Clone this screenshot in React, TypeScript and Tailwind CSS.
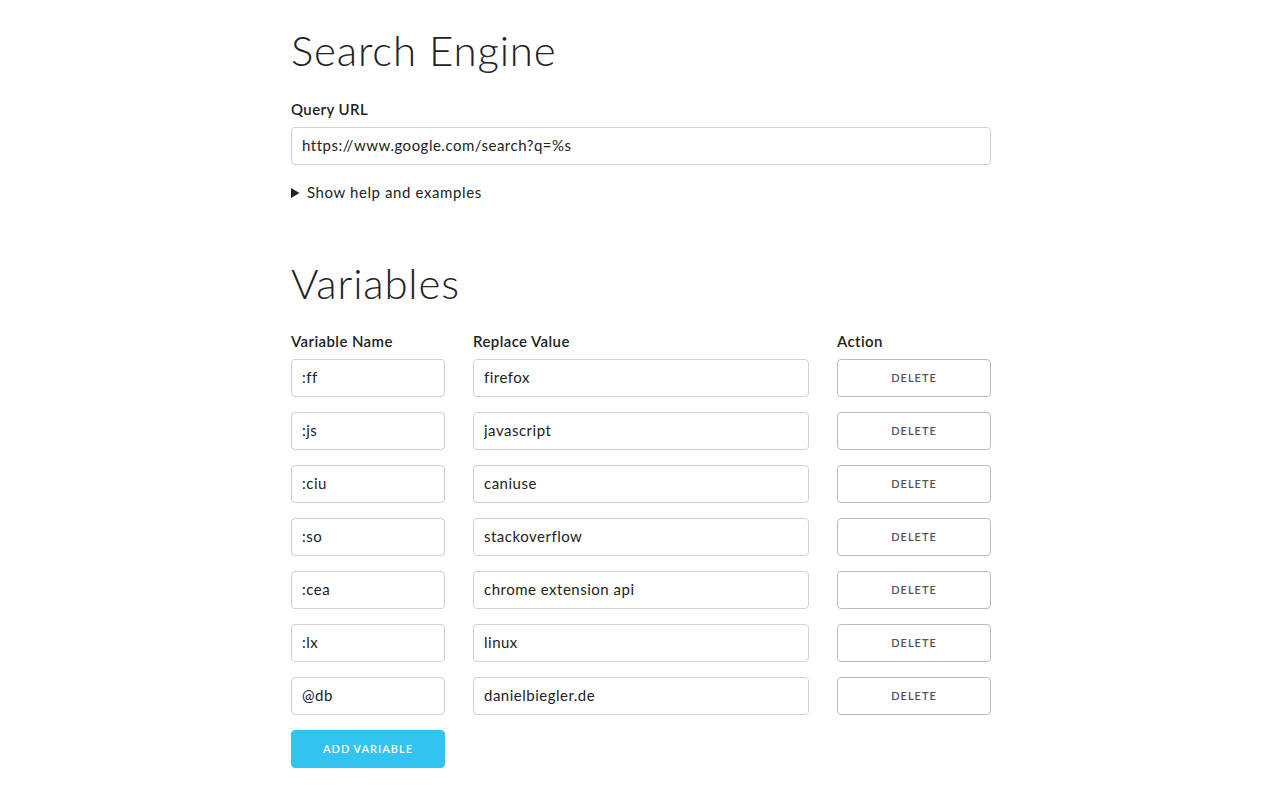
import { useState } from 'react'

type Variable = {
  name: string
  value: string
}

const initialVariables: Variable[] = [
  { name: ':ff', value: 'firefox' },
  { name: ':js', value: 'javascript' },
  { name: ':ciu', value: 'caniuse' },
  { name: ':so', value: 'stackoverflow' },
  { name: ':cea', value: 'chrome extension api' },
  { name: ':lx', value: 'linux' },
  { name: '@db', value: 'danielbiegler.de' },
]

const inputClass =
  'h-[38px] w-full rounded-[4px] border border-[#d1d1d1] bg-white px-[10px] pt-[5px] pb-[7px] text-[15px] tracking-[0.5px] text-[#222] outline-none focus:border-[#33c3f0]'

const labelClass = 'mb-[7px] block font-semibold leading-[22px] tracking-[0.4px]'

export default function App() {
  const [queryUrl, setQueryUrl] = useState('https://www.google.com/search?q=%s')
  const [variables, setVariables] = useState<Variable[]>(initialVariables)

  const updateVariable = (index: number, field: keyof Variable, text: string) => {
    setVariables(variables.map((v, i) => (i === index ? { ...v, [field]: text } : v)))
  }

  return (
    <div className="min-h-screen bg-white pl-[2px] font-['Lato','Noto_Sans',sans-serif] text-[15px] leading-[1.6] text-[#222]">
      <div className="mx-auto w-[700px] pt-[24px]">
        <h2 className="mb-[21px] text-[42px] leading-[1.25] font-light tracking-[0.8px]">Search Engine</h2>

        <label className={labelClass}>Query URL</label>
        <input
          className={inputClass + ' mb-[15px]'}
          value={queryUrl}
          onChange={(e) => setQueryUrl(e.target.value)}
        />

        <details className="mb-[53px]">
          <summary className="cursor-pointer tracking-[0.6px]">Show help and examples</summary>
          <p className="mt-2 text-[#555]">
            Use %s in the query URL where your search terms should go.
          </p>
        </details>

        <h2 className="mb-[21px] text-[42px] leading-[1.25] font-light tracking-[0.8px]">Variables</h2>

        <div className="flex gap-[28px]">
          <label className={labelClass + ' w-[154px]'}>Variable Name</label>
          <label className={labelClass + ' w-[336px]'}>Replace Value</label>
          <label className={labelClass + ' w-[154px]'}>Action</label>
        </div>

        {variables.map((v, i) => (
          <div key={i} className="mb-[15px] flex gap-[28px]">
            <div className="w-[154px]">
              <input
                className={inputClass}
                value={v.name}
                onChange={(e) => updateVariable(i, 'name', e.target.value)}
              />
            </div>
            <div className="w-[336px]">
              <input
                className={inputClass}
                value={v.value}
                onChange={(e) => updateVariable(i, 'value', e.target.value)}
              />
            </div>
            <div className="w-[154px]">
              <button
                className="h-[38px] w-full rounded-[4px] border border-[#bbb] bg-transparent text-[11px] font-semibold tracking-[1px] text-[#555] uppercase hover:border-[#888] hover:text-[#333]"
                onClick={() => setVariables(variables.filter((_, j) => j !== i))}
              >
                Delete
              </button>
            </div>
          </div>
        ))}

        <button
          className="h-[38px] w-[154px] rounded-[4px] border border-[#33c3f0] bg-[#33c3f0] text-[11px] font-semibold tracking-[1px] text-white uppercase hover:bg-[#1eaedb]"
          onClick={() => setVariables([...variables, { name: '', value: '' }])}
        >
          Add Variable
        </button>
      </div>
    </div>
  )
}
